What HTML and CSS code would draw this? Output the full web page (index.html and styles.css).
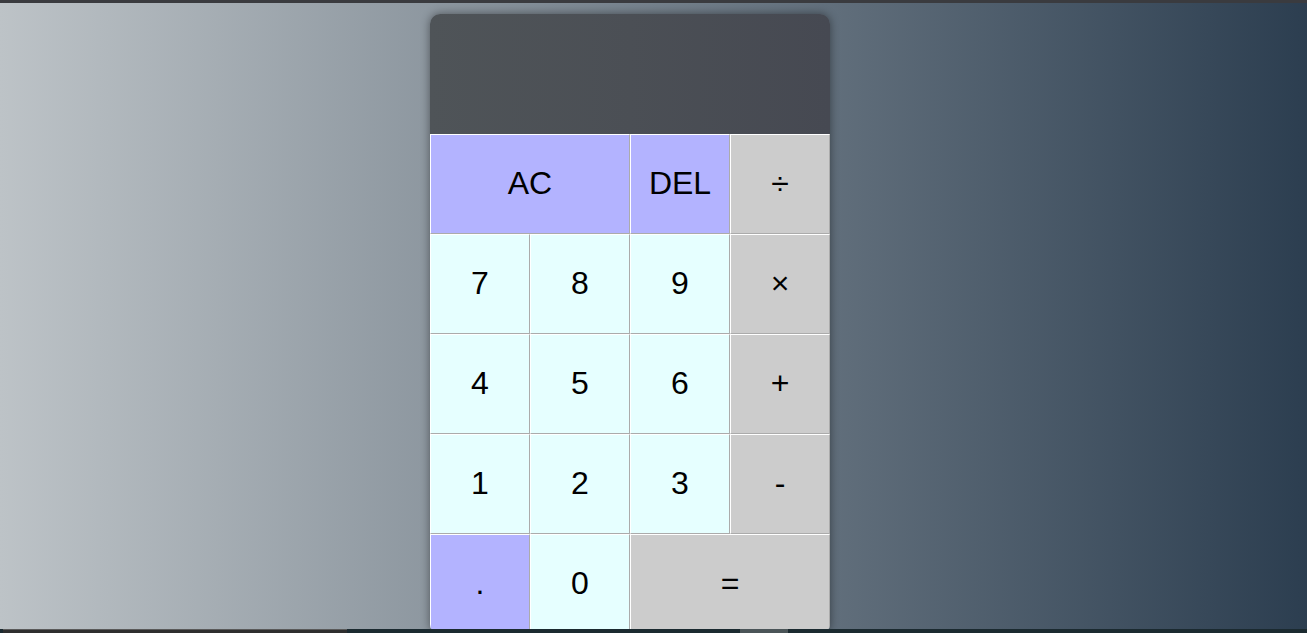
FILE: index.html
```html
<!DOCTYPE html>
<html lang="en">
<head>
<meta charset="utf-8">
<title>Calculator</title>
<link rel="stylesheet" href="styles.css">
</head>
<body>
<div class="topbar"></div>
<main class="stage">
  <div class="calculator">
    <div class="output"></div>
    <button class="key key-fn span-two">AC</button>
    <button class="key key-fn">DEL</button>
    <button class="key key-op">÷</button>
    <button class="key key-num">7</button>
    <button class="key key-num">8</button>
    <button class="key key-num">9</button>
    <button class="key key-op">×</button>
    <button class="key key-num">4</button>
    <button class="key key-num">5</button>
    <button class="key key-num">6</button>
    <button class="key key-op">+</button>
    <button class="key key-num">1</button>
    <button class="key key-num">2</button>
    <button class="key key-num">3</button>
    <button class="key key-op">-</button>
    <button class="key key-fn">.</button>
    <button class="key key-num">0</button>
    <button class="key key-op span-two">=</button>
  </div>
</main>
<div class="taskstrip">
  <span class="strip-a"></span>
  <span class="strip-b"></span>
</div>
</body>
</html>
```
FILE: styles.css
```css
* {
  box-sizing: border-box;
}

html, body {
  margin: 0;
  padding: 0;
  height: 100%;
  overflow: hidden;
}

body {
  font-family: "Liberation Sans", Arial, sans-serif;
  background: #3a3b3f;
}

.topbar {
  height: 3px;
  background: #3a3b3f;
}

.stage {
  height: calc(100% - 3px);
  background: linear-gradient(to right, #bdc3c7, #2c3e50);
  display: flex;
  justify-content: center;
  align-items: flex-start;
  padding-top: 11px;
  padding-right: 47px;
}

.calculator {
  display: grid;
  grid-template-columns: repeat(4, 100px);
  grid-template-rows: 120px repeat(5, 100px);
  border-radius: 10px;
  overflow: hidden;
  box-shadow: 0 0 10px rgba(0, 0, 0, 0.45);
}

.output {
  grid-column: 1 / -1;
  background: linear-gradient(to right, #4f5458, #4b4f55 50%, #464952);
}

.key {
  font-family: "Liberation Sans", Arial, sans-serif;
  font-size: 32px;
  color: #000;
  border-style: solid;
  border-width: 1px;
  border-color: #ffffff #ababab #ababab #ffffff;
  padding: 0 0 2px 0;
  margin: 0;
  outline: none;
  cursor: pointer;
}

.key-fn {
  background: #b3b3ff;
}

.key-num {
  background: #e6ffff;
}

.key-op {
  background: #cccccc;
}

.span-two {
  grid-column: span 2;
}

.taskstrip {
  position: fixed;
  left: 0;
  right: 0;
  bottom: 0;
  height: 4px;
  background: #1b2a30;
}

.strip-a {
  position: absolute;
  left: 3px;
  width: 344px;
  top: 0;
  bottom: 0;
  background: #2e2e2e;
  border-top: 1px solid #5a5a5a;
}

.strip-b {
  position: absolute;
  left: 740px;
  width: 48px;
  top: 0;
  bottom: 0;
  background: #4b5558;
}
```
